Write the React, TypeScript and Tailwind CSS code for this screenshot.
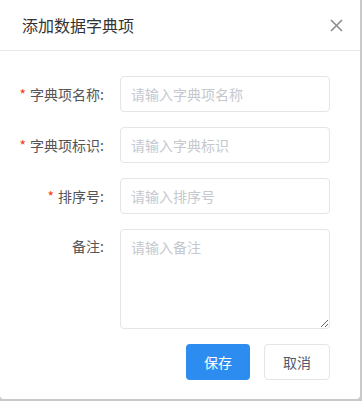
import { useState } from 'react';

const FONT = { fontFamily: '"Noto Sans CJK SC", "Noto Sans", sans-serif' };

interface FieldProps {
  label: string;
  required?: boolean;
  placeholder: string;
}

function Field({ label, required, placeholder }: FieldProps) {
  const [value, setValue] = useState('');
  return (
    <div className="flex items-center">
      <label className="flex w-[104px] items-center justify-end text-[14px] text-[#555]">
        {required ? <span className="mr-[4px] text-[#ed4014]">*</span> : null}
        {label}:
      </label>
      <input
        className="ml-[16px] h-[36px] w-[210px] rounded-[4px] border border-[#e3e5e8] px-[10px] text-[14px] text-[#515a6e] outline-none placeholder:text-[#c5c8ce]"
        placeholder={placeholder}
        value={value}
        onChange={(e) => setValue(e.target.value)}
      />
    </div>
  );
}

export default function App() {
  const [note, setNote] = useState('');

  return (
    <div className="h-[401px] w-[362px] bg-[#c9c9c9]" style={FONT}>
      <div className="flex h-[399px] w-[360px] flex-col rounded-b-[4px] bg-white">
        <div className="flex h-[51px] items-center justify-between border-b border-[#e8eaec] pl-[22px] pr-[17px]">
          <h2 className="text-[16px] text-[#333]">添加数据字典项</h2>
          <button type="button" className="text-[#8c8c8c]">
            <svg width="13" height="13" viewBox="0 0 13 13" fill="none" stroke="currentColor" strokeWidth="1.6">
              <path d="M1 1l11 11M12 1L1 12" />
            </svg>
          </button>
        </div>

        <div className="flex flex-col gap-[15px] pt-[25px]">
          <Field label="字典项名称" required placeholder="请输入字典项名称" />
          <Field label="字典项标识" required placeholder="请输入字典标识" />
          <Field label="排序号" required placeholder="请输入排序号" />
          <div className="flex items-start">
            <label className="w-[104px] pt-[7px] text-right text-[14px] text-[#555]">备注:</label>
            <textarea
              className="ml-[16px] h-[100px] w-[210px] rounded-[4px] border border-[#e3e5e8] px-[10px] py-[7px] text-[14px] leading-[20px] text-[#515a6e] outline-none placeholder:text-[#c5c8ce]"
              placeholder="请输入备注"
              value={note}
              onChange={(e) => setNote(e.target.value)}
            />
          </div>
        </div>

        <div className="mt-[15px] flex justify-end gap-[14px] pr-[30px]">
          <button
            type="button"
            className="h-[36px] w-[64px] rounded-[4px] bg-[#2d8cf0] text-[14px] text-white"
          >
            保存
          </button>
          <button
            type="button"
            className="h-[36px] w-[66px] rounded-[4px] border border-[#e3e5e8] bg-white text-[14px] text-[#515a6e]"
          >
            取消
          </button>
        </div>
      </div>
    </div>
  );
}
